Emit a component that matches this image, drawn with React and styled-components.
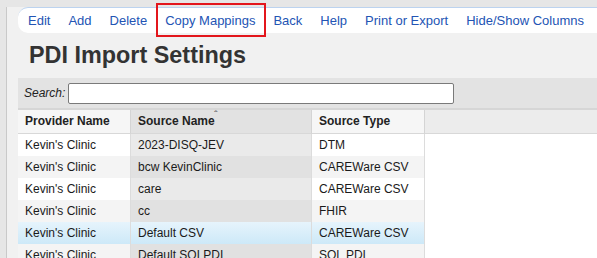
import React from "react";
import styled, { createGlobalStyle } from "styled-components";

const Global = createGlobalStyle`
  html, body { margin: 0; padding: 0; }
  body {
    background: #e6e6e6;
    font-family: Arial, "Liberation Sans", sans-serif;
    overflow: hidden;
  }
`;

const Shell = styled.div`
  padding: 7px 0 0 6px;
  height: 258px;
  box-sizing: border-box;
`;

const Frame = styled.div`
  border-left: 1px solid #c9c9c9;
  background: #f1f1f1;
  height: 100%;
  padding-left: 11px;
`;

const Toolbar = styled.nav`
  display: flex;
  align-items: center;
  height: 25px;
  padding-left: 1px;
  background: #fff;
  border-top: 1px solid #bcd3ef;
  border-radius: 10px 0 0 10px;
`;

const ToolLink = styled.a`
  position: relative;
  padding: 0 9px;
  font-size: 13px;
  color: #2354b4;
  text-decoration: none;
  line-height: 25px;
  white-space: nowrap;
  ${(p) =>
    p.$marked &&
    `
    &::after {
      content: "";
      position: absolute;
      left: 0px; right: -2px; top: -5px; bottom: -4px;
      border: 2px solid #e3161c;
    }
  `}
`;

const Title = styled.h1`
  margin: 0;
  padding: 9px 0 0 11px;
  height: 45px;
  box-sizing: border-box;
  font-size: 23.4px;
  font-weight: bold;
  color: #333;
`;

const SearchBar = styled.div`
  display: flex;
  align-items: center;
  gap: 3px;
  height: 30px;
  background: #e3e3e3;
  padding-left: 6px;
  border-bottom: 2px solid #d6d6d6;
`;

const SearchLabel = styled.label`
  font-size: 12px;
  font-style: italic;
  color: #222;
`;

const SearchInput = styled.div`
  width: 384px;
  height: 19px;
  background: #fff;
  border: 1px solid #7a7a7a;
  border-radius: 2px;
`;

const Table = styled.div`
  display: grid;
  grid-template-columns: 113px 181px 113px 1fr;
  background: #fff;
`;

const HeadCell = styled.div`
  position: relative;
  height: 23px;
  line-height: 23px;
  padding-left: 7px;
  font-size: 12px;
  font-weight: bold;
  color: #222;
  background: ${(p) => (p.$sorted ? "#e2e2e2" : p.$filler ? "#ececec" : "#f6f6f6")};
  border-right: ${(p) => (p.$filler ? "none" : "1px solid #d4d4d4")};
  border-bottom: 1px solid #d8d8d8;
`;

const SortCaret = styled.span`
  position: absolute;
  left: 83px;
  top: 0px;
  line-height: 10px;
  font-size: 11px;
  font-weight: normal;
  color: #555;
`;

const Cell = styled.div`
  height: 22px;
  line-height: 22px;
  padding-left: 7px;
  font-size: 12px;
  color: #1a1a1a;
  border-right: ${(p) => (p.$filler ? "none" : "1px solid #dcdcdc")};
  background: ${(p) => {
    if (p.$filler) return "#fff";
    if (p.$hover) return "linear-gradient(#e6f4fc, #cde9f8)";
    if (p.$sorted) return p.$odd ? "#e1e1e1" : "#eaeaea";
    return p.$odd ? "#f4f4f4" : "#fff";
  }};
`;

const rows = [
  ["Kevin's Clinic", "2023-DISQ-JEV", "DTM"],
  ["Kevin's Clinic", "bcw KevinClinic", "CAREWare CSV"],
  ["Kevin's Clinic", "care", "CAREWare CSV"],
  ["Kevin's Clinic", "cc", "FHIR"],
  ["Kevin's Clinic", "Default CSV", "CAREWare CSV"],
  ["Kevin's Clinic", "Default SQLPDI", "SQL PDI"],
];

const links = ["Edit", "Add", "Delete", "Copy Mappings", "Back", "Help", "Print or Export", "Hide/Show Columns"];

export default function App() {
  return (
    <>
      <Global />
      <Shell>
        <Frame>
          <Toolbar>
            {links.map((l) => (
              <ToolLink key={l} href="#" $marked={l === "Copy Mappings"}>
                {l}
              </ToolLink>
            ))}
          </Toolbar>
          <Title>PDI Import Settings</Title>
          <SearchBar>
            <SearchLabel>Search:</SearchLabel>
            <SearchInput />
          </SearchBar>
          <Table>
            <HeadCell>Provider Name</HeadCell>
            <HeadCell $sorted>
              Source Name<SortCaret>ˆ</SortCaret>
            </HeadCell>
            <HeadCell>Source Type</HeadCell>
            <HeadCell $filler />
            {rows.map((r, i) => {
              const odd = i % 2 === 1;
              const hover = i === 4;
              return (
                <React.Fragment key={i}>
                  <Cell $odd={odd} $hover={hover}>{r[0]}</Cell>
                  <Cell $odd={odd} $hover={hover} $sorted>{r[1]}</Cell>
                  <Cell $odd={odd} $hover={hover}>{r[2]}</Cell>
                  <Cell $filler />
                </React.Fragment>
              );
            })}
          </Table>
        </Frame>
      </Shell>
    </>
  );
}
